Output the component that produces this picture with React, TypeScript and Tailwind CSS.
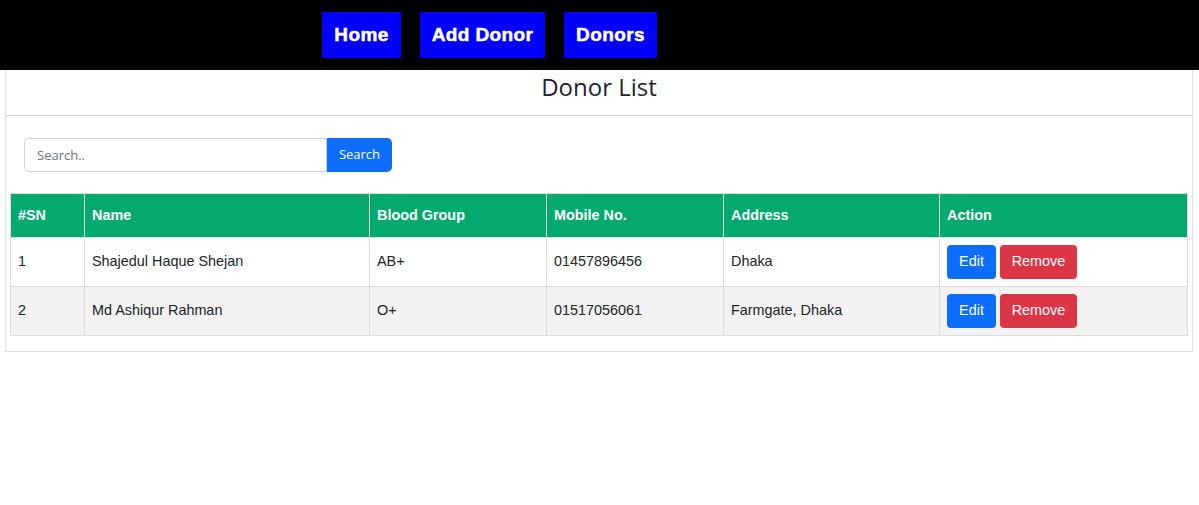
import React from 'react';

const donors = [
  { sn: 1, name: 'Shajedul Haque Shejan', blood: 'AB+', mobile: '01457896456', address: 'Dhaka' },
  { sn: 2, name: 'Md Ashiqur Rahman', blood: 'O+', mobile: '01517056061', address: 'Farmgate, Dhaka' },
];

const headers = ['#SN', 'Name', 'Blood Group', 'Mobile No.', 'Address', 'Action'];

const navItems = [
  { label: 'Home', w: 'w-[79px]' },
  { label: 'Add Donor', w: 'w-[125px]' },
  { label: 'Donors', w: 'w-[93px]' },
];

export default function App() {
  return (
    <div className="min-h-[505px] bg-white">
      <nav className="h-[70px] bg-black flex items-start pt-3 pl-[322px] gap-[19px]">
        {navItems.map((item) => (
          <a
            key={item.label}
            className={`${item.w} h-[46px] flex items-center justify-center bg-[#0000ff] text-white text-[19px] font-black tracking-[0.4px] [-webkit-text-stroke:0.5px_white] [font-family:'Arial_Black','Liberation_Sans',sans-serif]`}
          >
            {item.label}
          </a>
        ))}
      </nav>

      <div className="mx-[5px] w-[1188px] border border-t-0 border-[#dfdfdf]">
        <div className="h-[46px] pb-[11px] border-b border-[#d0d0d0] flex items-center justify-center text-[24px] font-medium text-[#212529] [font-family:'Open_Sans',sans-serif]">
          Donor List
        </div>

        <div className="px-[4px] pt-[22px] pb-[15px]">
          <form className="flex ml-[14px] mb-[21px]">
            <input
              placeholder="Search.."
              className="w-[303px] h-[34px] border border-[#ced4da] rounded-l-[5px] px-3 text-[13px] text-[#212529] placeholder:text-[#6c757d] outline-none [font-family:'Open_Sans',sans-serif]"
            />
            <button
              type="button"
              className="w-[65px] h-[34px] bg-[#0d6efd] text-white text-[13px] rounded-r-[5px] [font-family:'Open_Sans',sans-serif]"
            >
              Search
            </button>
          </form>

          <table className="w-[1178px] border-collapse text-[14.4px] [font-family:'Liberation_Sans',Arial,sans-serif]">
            <colgroup>
              <col className="w-[74px]" />
              <col className="w-[285px]" />
              <col className="w-[177px]" />
              <col className="w-[177px]" />
              <col className="w-[216px]" />
              <col />
            </colgroup>
            <thead>
              <tr className="h-[44px] bg-[#04a96d]">
                {headers.map((h) => (
                  <th key={h} className="border border-[#dddddd] px-[7px] text-left font-bold text-white">
                    {h}
                  </th>
                ))}
              </tr>
            </thead>
            <tbody>
              {donors.map((d, i) => (
                <tr key={d.sn} className={`h-[49px] ${i % 2 === 1 ? 'bg-[#f2f2f2]' : 'bg-white'}`}>
                  <td className="border border-[#dddddd] px-[7px] text-[#212529]">{d.sn}</td>
                  <td className="border border-[#dddddd] px-[7px] text-[#212529]">{d.name}</td>
                  <td className="border border-[#dddddd] px-[7px] text-[#212529]">{d.blood}</td>
                  <td className="border border-[#dddddd] px-[7px] text-[#212529]">{d.mobile}</td>
                  <td className="border border-[#dddddd] px-[7px] text-[#212529]">{d.address}</td>
                  <td className="border border-[#dddddd] px-[7px]">
                    <div className="flex gap-[4px]">
                      <button className="w-[49px] h-[34px] rounded-[4px] bg-[#0d6efd] text-white text-[14.4px]">Edit</button>
                      <button className="w-[77px] h-[34px] rounded-[4px] bg-[#dc3545] text-white text-[14.4px]">Remove</button>
                    </div>
                  </td>
                </tr>
              ))}
            </tbody>
          </table>
        </div>
      </div>
    </div>
  );
}
